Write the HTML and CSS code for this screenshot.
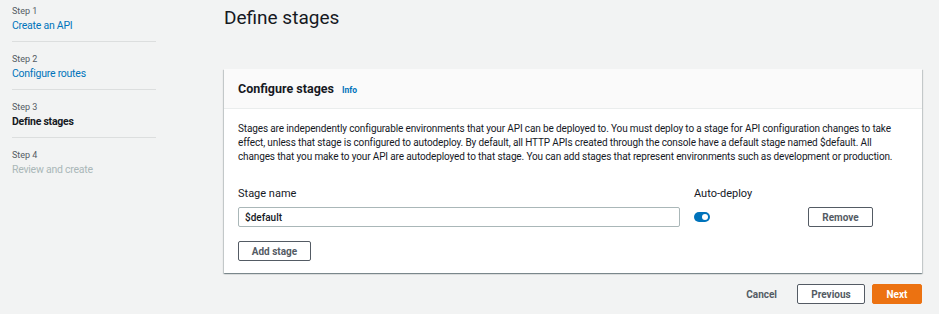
FILE: index.html
```html
<!DOCTYPE html>
<html lang="en">
<head>
  <meta charset="UTF-8">
  <meta name="viewport" content="width=device-width, initial-scale=1.0">
  <title>Create an API - Define stages</title>
  <link rel="stylesheet" href="styles.css">
</head>
<body>

  <div class="wizard">
    <!-- steps on the left -->
    <nav class="steps">
      <div class="step">
        <div class="step__number">Step 1</div>
        <a class="step__title step__title--link" href="#">Create an API</a>
      </div>
      <div class="step">
        <div class="step__number">Step 2</div>
        <a class="step__title step__title--link" href="#">Configure routes</a>
      </div>
      <div class="step">
        <div class="step__number">Step 3</div>
        <div class="step__title step__title--current">Define stages</div>
      </div>
      <div class="step">
        <div class="step__number">Step 4</div>
        <div class="step__title step__title--disabled">Review and create</div>
      </div>
    </nav>

    <main class="content">
      <h1 class="content__title">Define stages</h1>

      <section class="card">
        <div class="card__header">
          <h2 class="card__title">Configure stages</h2>
          <a class="card__info" href="#">Info</a>
        </div>
        <div class="card__body">
          <p class="card__text">
            Stages are independently configurable environments that your API can be deployed to. You must deploy to a stage for API configuration changes to take
            effect, unless that stage is configured to autodeploy. By default, all HTTP APIs created through the console have a default stage named $default. All
            changes that you make to your API are autodeployed to that stage. You can add stages that represent environments such as development or production.
          </p>

          <div class="stage-row">
            <div class="stage-row__name">
              <label class="field-label">Stage name</label>
              <input class="text-input" type="text" value="$default">
            </div>
            <div class="stage-row__deploy">
              <div class="field-label">Auto-deploy</div>
              <div class="toggle-wrap">
                <span class="toggle"></span>
              </div>
            </div>
            <div class="stage-row__remove">
              <button class="btn">Remove</button>
            </div>
          </div>

          <button class="btn btn--add">Add stage</button>
        </div>
      </section>

      <div class="actions">
        <a class="actions__cancel" href="#">Cancel</a>
        <button class="btn">Previous</button>
        <button class="btn btn--primary">Next</button>
      </div>
    </main>
  </div>

</body>
</html>
```

FILE: styles.css
```css
:root {
  --clr-bg: #f2f3f3;
  --clr-text: #16191f;
  --clr-grey: #545b64;
  --clr-link: #0073bb;
  --clr-border: #aab7b8;
  --clr-orange: #ec7211;

  font-family: Roboto, "Liberation Sans", sans-serif;
}

* {
  box-sizing: border-box;
}

body {
  margin: 0;
  background: var(--clr-bg);
  color: var(--clr-text);
}

.wizard {
  display: flex;
  width: 939px;
  height: 314px;
}

/* left nav */
.steps {
  width: 224px;
  padding: 5px 68px 0 12px;
  flex: 0 0 auto;
}

.step {
  padding: 0 0 7px;
  margin-bottom: 11px;
  border-bottom: 1px solid #dcdede;
}

.step:last-child {
  border-bottom: none;
}

.step__number {
  font-size: 9px;
  line-height: 13px;
  color: var(--clr-grey);
}

.step__title {
  display: block;
  font-size: 10.5px;
  line-height: 16px;
  letter-spacing: -0.25px;
  text-decoration: none;
}

.step__title--link {
  color: var(--clr-link);
}

.step__title--current {
  font-weight: 700;
  color: var(--clr-text);
}

.step__title--disabled {
  color: #aab7b8;
}

/* main area */
.content {
  flex: 1 1 auto;
  padding-right: 17px;
}

.content__title {
  margin: 5px 0 0;
  font-size: 19px;
  font-weight: 400;
  line-height: 26px;
}

.card {
  margin-top: 38px;
  background: #fff;
  box-shadow: 0 1px 1px 0 rgba(0, 28, 36, 0.3), 1px 1px 1px 0 rgba(0, 28, 36, 0.15), -1px 1px 1px 0 rgba(0, 28, 36, 0.15);
}

.card__header {
  display: flex;
  align-items: baseline;
  gap: 8px;
  height: 40px;
  padding: 12px 14px 0;
  background: #fafafa;
  border-bottom: 1px solid #eaeded;
}

.card__title {
  margin: 0;
  font-size: 12.5px;
  font-weight: 700;
}

.card__info {
  font-size: 8.5px;
  font-weight: 700;
  color: var(--clr-link);
  text-decoration: none;
}

.card__body {
  padding: 13px 14px 12px;
}

.card__text {
  margin: 0;
  font-size: 10px;
  line-height: 14px;
  letter-spacing: -0.13px;
  color: var(--clr-text);
}

.stage-row {
  display: flex;
  margin-top: 23px;
}

.field-label {
  display: block;
  font-size: 11px;
  line-height: 14px;
  margin-bottom: 6px;
}

.stage-row__name {
  width: 442px;
  margin-right: 14px;
}

.text-input {
  display: block;
  width: 100%;
  height: 20px;
  padding: 0 6px;
  border: 1px solid var(--clr-border);
  border-radius: 2px;
  font: inherit;
  font-size: 10px;
  font-weight: 500;
  color: var(--clr-text);
}

.stage-row__deploy {
  width: 114px;
}

.toggle-wrap {
  height: 20px;
  display: flex;
  align-items: center;
}

.toggle {
  display: block;
  width: 16px;
  height: 10px;
  border-radius: 5px;
  background: var(--clr-link);
  position: relative;
}

.toggle::after {
  content: '';
  position: absolute;
  top: 2px;
  right: 2px;
  width: 6px;
  height: 6px;
  border-radius: 50%;
  background: #fff;
}

.stage-row__remove {
  padding-top: 20px;
}

.btn {
  display: block;
  height: 20px;
  padding: 0 12px;
  background: #fff;
  border: 1px solid var(--clr-grey);
  border-radius: 2px;
  font: inherit;
  font-size: 10px;
  font-weight: 700;
  color: var(--clr-grey);
  cursor: pointer;
}

.stage-row__remove .btn {
  width: 65px;
}

.btn--add {
  margin-top: 14px;
  width: 73px;
}

.actions {
  display: flex;
  justify-content: flex-end;
  align-items: center;
  gap: 7px;
  margin-top: 11px;
}

.actions__cancel {
  font-size: 10px;
  font-weight: 700;
  color: var(--clr-grey);
  text-decoration: none;
  margin-right: 13px;
}

.actions .btn {
  width: 68px;
}

.actions .btn--primary {
  width: 50px;
  background: var(--clr-orange);
  border-color: var(--clr-orange);
  color: #fff;
}
```
